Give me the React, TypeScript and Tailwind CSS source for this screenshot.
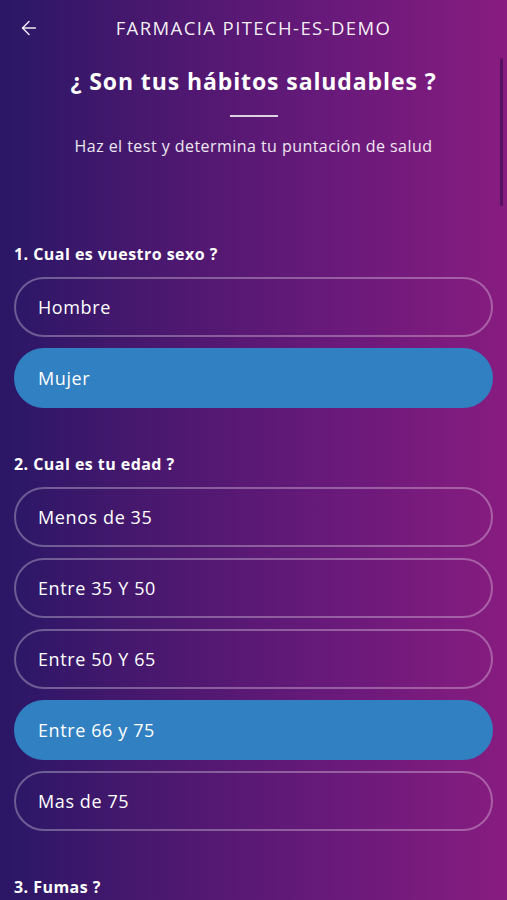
import { ArrowLeft } from 'lucide-react'

const questions = [
  {
    title: '1. Cual es vuestro sexo ?',
    options: ['Hombre', 'Mujer'],
    selected: 1,
  },
  {
    title: '2. Cual es tu edad ?',
    options: ['Menos de 35', 'Entre 35 Y 50', 'Entre 50 Y 65', 'Entre 66 y 75', 'Mas de 75'],
    selected: 3,
  },
  {
    title: '3. Fumas ?',
    options: [],
    selected: -1,
  },
]

interface OptionProps {
  label: string
  active: boolean
}

const Option = ({ label, active }: OptionProps) => (
  <div
    className={
      active
        ? 'h-[60px] rounded-full bg-[#3180c1] border-2 border-[#3180c1] flex items-center px-[22px] text-[18px] tracking-[0.6px] text-white'
        : 'h-[60px] rounded-full border-2 border-white/30 flex items-center px-[22px] text-[18px] tracking-[0.6px] text-white'
    }
  >
    {label}
  </div>
)

const App = () => {
  return (
    <div
      className="relative w-[507px] h-[900px] overflow-hidden text-white bg-[linear-gradient(90deg,#2a1766_0%,#4e1870_35%,#6c1a7b_70%,#881c80_100%)]"
      style={{ fontFamily: '"Open Sans", "Noto Sans", sans-serif' }}
    >
      <div className="flex items-center h-[55px] px-[18px]">
        <ArrowLeft size={22} strokeWidth={1.6} className="text-white/90" />
        <div className="flex-1 text-center text-[18.5px] tracking-[1.4px] text-white/95 pr-[22px]">
          FARMACIA PITECH-ES-DEMO
        </div>
      </div>

      <div className="flex flex-col items-center">
        <h1 className="mt-[11px] text-[23px] font-bold leading-[30px] tracking-[0.9px]">¿ Son tus hábitos saludables ?</h1>
        <div className="mt-[19px] w-[48px] h-[2px] bg-white/80" />
        <p className="mt-[17px] text-[16px] tracking-[0.45px] text-white/90">Haz el test y determina tu puntación de salud</p>
      </div>

      <div className="px-[14px] mt-[84px] flex flex-col">
        {questions.map((q) => (
          <div key={q.title} className="flex flex-col mb-[44px]">
            <h2 className="text-[16px] font-bold tracking-[0.45px] mb-[11px]">{q.title}</h2>
            <div className="flex flex-col gap-[11px]">
              {q.options.map((o, i) => (
                <Option key={o} label={o} active={i === q.selected} />
              ))}
            </div>
          </div>
        ))}
      </div>

      <div className="absolute right-[4px] top-[58px] w-[3px] h-[148px] rounded-full bg-[#4a0f58]/80" />
    </div>
  )
}

export default App
